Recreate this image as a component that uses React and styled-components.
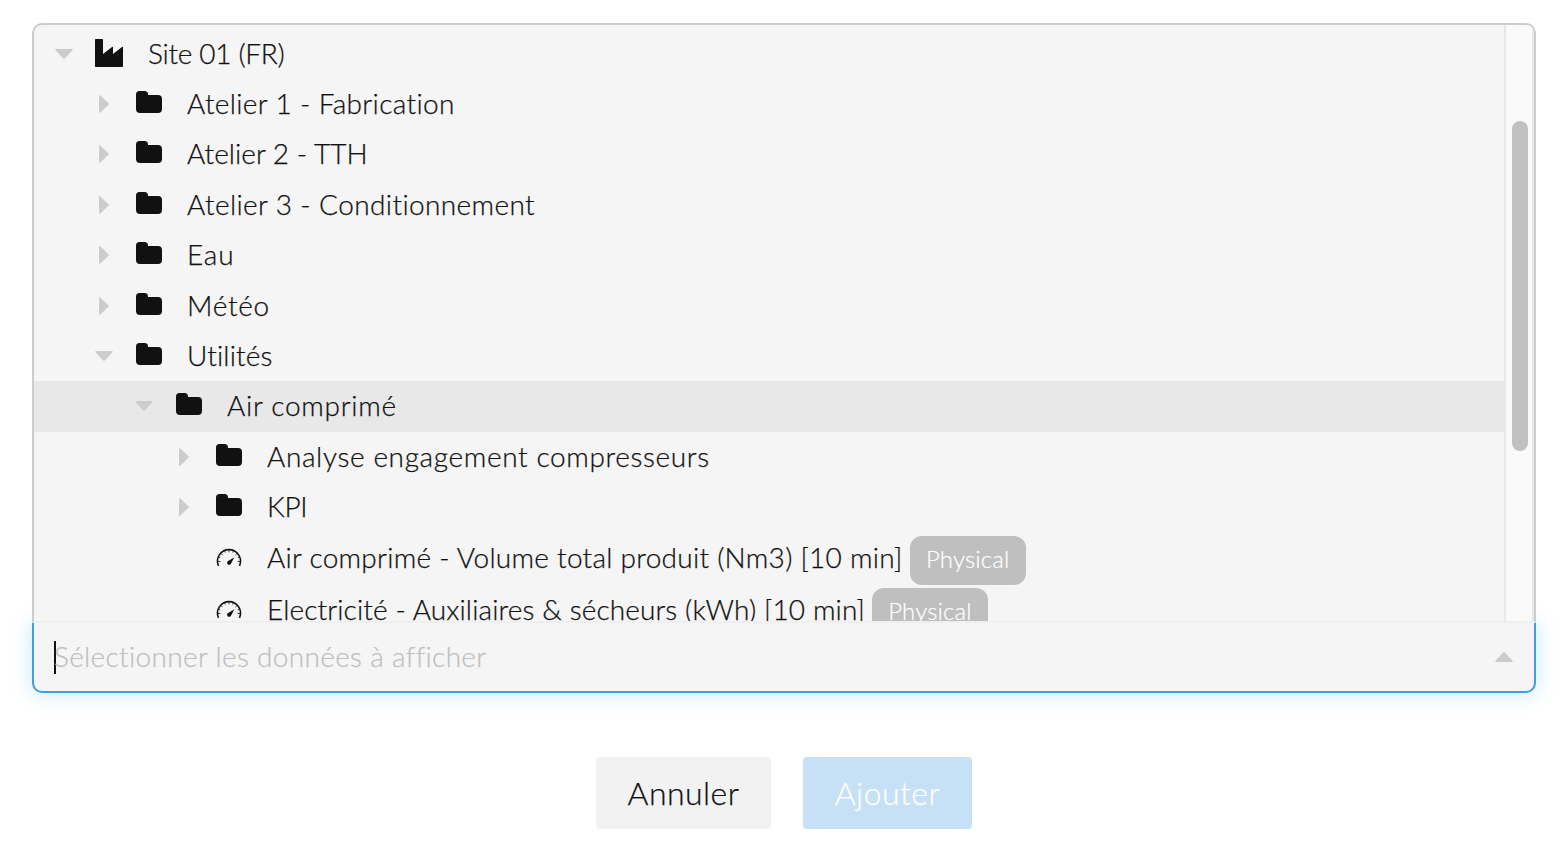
import React, { useState } from 'react';
import styled, { createGlobalStyle } from 'styled-components';

const GlobalStyle = createGlobalStyle`
  * {
    box-sizing: border-box;
  }

  body {
    margin: 0;
    background: #fff;
    color: #111;
    font-family: Lato, 'Open Sans', sans-serif;
    font-weight: 300;
    overflow: hidden;
  }
`;

const Page = styled.main`
  height: 864px;
  padding: 23px 32px 0;
`;

const Picker = styled.div`
  display: flex;
  flex-direction: column;
`;

const TreePanel = styled.div`
  position: relative;
  z-index: 1;
  display: flex;
  height: 600px;
  border: 2px solid #ccc;
  border-bottom-color: #efefef;
  border-radius: 10px 10px 0 0;
  background: #f5f5f5;
  overflow: hidden;
`;

const Tree = styled.ul`
  flex: 1;
  height: 596px;
  margin: 0;
  padding: 3.4px 0 0;
  list-style: none;
  overflow: hidden;
`;

const Row = styled.li`
  display: flex;
  align-items: center;
  height: ${props => (props.$leaf ? '52px' : '50.4px')};
  padding-left: ${props => props.$level * 40 + 20}px;
  background: ${props => (props.$selected ? '#e8e8e8' : 'transparent')};
  cursor: pointer;
`;

const Toggle = styled.span`
  display: flex;
  justify-content: center;
  width: 20px;
  margin-right: 20px;
  color: #ccc;
`;

const IconSlot = styled.span`
  display: flex;
  min-width: 30px;
  margin-right: 23px;
  padding-bottom: 2px;
`;

const Label = styled.span`
  padding-bottom: 2px;
  font-size: 28px;
  line-height: 40px;
  white-space: nowrap;
  letter-spacing: ${props => props.$tracking || 0}px;
  -webkit-text-stroke: 0.25px currentColor;
`;

const Badge = styled.span`
  height: 49px;
  width: 116px;
  margin: 4px 0 0 7px;
  border-radius: 12px;
  background: #bfbfbf;
  color: #fff;
  font-size: 24px;
  line-height: 46px;
  letter-spacing: 0.15px;
  text-align: center;
  -webkit-text-stroke: 0.2px currentColor;
`;

const ScrollTrack = styled.div`
  width: 30px;
  padding: 96px 4px 0 6px;
  border: solid #e8e8e8;
  border-width: 0 2px;
  background: #fafafa;
`;

const ScrollThumb = styled.div`
  width: 16px;
  height: 330px;
  border-radius: 8px;
  background: #c1c1c1;
`;

const SearchField = styled.div`
  display: flex;
  align-items: center;
  height: 70px;
  padding: 0 21px 0 20px;
  border: 2px solid #409fdd;
  border-top: 0;
  border-radius: 0 0 10px 10px;
  background: #f5f5f5;
  color: #ccc;
  box-shadow: 0 0 20px rgba(34, 164, 230, 0.28);
`;

const Caret = styled.span`
  width: 2px;
  height: 33px;
  margin-right: -2px;
  background: #111;
`;

const Placeholder = styled(Label)`
  flex: 1;
  color: #bfbfbf;
`;

const Actions = styled.div`
  display: flex;
  justify-content: center;
  gap: 32px;
  margin-top: 64px;
`;

const Button = styled.button`
  width: ${props => (props.$primary ? 169 : 175)}px;
  height: 72px;
  padding: 0 0 2px;
  border: 0;
  border-radius: 4px;
  background: ${props => (props.$primary ? '#c6e0f5' : '#f2f2f2')};
  color: ${props => (props.$primary ? '#fff' : '#111')};
  font: inherit;
  font-size: 32px;
  letter-spacing: 0.45px;
  -webkit-text-stroke: 0.25px currentColor;
`;

const Arrow = ({ direction }) => {
  if (direction === 'right') {
    return (
      <svg width="10" height="18" viewBox="0 0 10 18" fill="currentColor">
        <path d="M0 1Q0 0 1 .3L9.5 8.2Q10.3 9 9.5 9.8L1 17.7Q0 18 0 17Z" />
      </svg>
    );
  }
  return (
    <svg
      width="18"
      height="10"
      viewBox="0 0 18 10"
      fill="currentColor"
      transform={direction === 'up' ? 'rotate(180)' : undefined}
    >
      <path d="M1 0Q0 0 .3 1L8.2 9.5Q9 10.3 9.8 9.5L17.7 1Q18 0 17 0Z" />
    </svg>
  );
};

const FolderIcon = () => (
  <svg width="30" height="26" viewBox="0 0 30 26" fill="#111">
    <path d="M5.500 1h5q3.500 0 3.500 3.500V5h10q4 0 4 4v10q0 4-4 4H6q-4 0-4-4V4.500Q2 1 5.500 1Z" />
  </svg>
);

const FactoryIcon = () => (
  <svg width="31" height="30" viewBox="0 0 31 30" fill="#111">
    <path d="M1.800 1h6.400q.8 0 .8.800V16l9-7q1-.8 1 .3V16l9-7q1-.8 1 .3V28.200q0 .8-.8.800H1.800q-.8 0-.8-.8V1.800q0-.8.800-.8Z" />
  </svg>
);

const GaugeIcon = () => (
  <svg width="30" height="26" viewBox="0 0 30 26" fill="none" stroke="#111">
    <path d="M4.500 21.800A11.500 11.500 0 1 1 25.500 21.800" strokeWidth="1.600" />
    <path
      d="M4 17.500h2.500M26 17.500h-2.500M15 6v2.300M7 9.500l1.600 1.600M23 9.500l-1.600 1.600M4.600 13.200l1.600.6M25.400 13.200l-1.600.6M10.700 7l.6 1.600M19.300 7l-.6 1.600"
      strokeWidth="0.800"
    />
    <path d="M20.400 13.300L17.200 19.300A2.100 2.100 0 1 1 14.600 16.700Z" fill="#111" stroke="none" />
  </svg>
);

const icons = {
  factory: FactoryIcon,
  folder: FolderIcon,
  gauge: GaugeIcon
};

const nodes = [
  { id: 1, level: 0, icon: 'factory', arrow: 'down', label: 'Site 01 (FR)', tracking: -0.3 },
  { id: 2, level: 1, icon: 'folder', arrow: 'right', label: 'Atelier 1 - Fabrication', tracking: 0.35 },
  { id: 3, level: 1, icon: 'folder', arrow: 'right', label: 'Atelier 2 - TTH', tracking: 0.03 },
  { id: 4, level: 1, icon: 'folder', arrow: 'right', label: 'Atelier 3 - Conditionnement', tracking: 0.39 },
  { id: 5, level: 1, icon: 'folder', arrow: 'right', label: 'Eau', tracking: 0.8 },
  { id: 6, level: 1, icon: 'folder', arrow: 'right', label: 'Météo', tracking: 0.7 },
  { id: 7, level: 1, icon: 'folder', arrow: 'down', label: 'Utilités', tracking: 0.15 },
  { id: 8, level: 2, icon: 'folder', arrow: 'down', label: 'Air comprimé', tracking: 0.72 },
  { id: 9, level: 3, icon: 'folder', arrow: 'right', label: 'Analyse engagement compresseurs', tracking: 0.63 },
  { id: 10, level: 3, icon: 'folder', arrow: 'right', label: 'KPI', tracking: -0.3 },
  { id: 11, level: 3, icon: 'gauge', label: 'Air comprimé - Volume total produit (Nm3) [10 min]', tracking: 0.27, badge: 'Physical' },
  { id: 12, level: 3, icon: 'gauge', label: 'Electricité - Auxiliaires & sécheurs (kWh) [10 min]', tracking: 0.12, badge: 'Physical' }
];

const App = () => {
  const [selected, setSelected] = useState(8);

  return (
    <Page>
      <GlobalStyle />
      <Picker>
        <TreePanel>
          <Tree>
            {nodes.map(node => {
              const Icon = icons[node.icon];
              return (
                <Row
                  key={node.id}
                  $level={node.level}
                  $leaf={!!node.badge}
                  $selected={node.id === selected}
                  onClick={() => setSelected(node.id)}
                >
                  <Toggle>{node.arrow && <Arrow direction={node.arrow} />}</Toggle>
                  <IconSlot>
                    <Icon />
                  </IconSlot>
                  <Label $tracking={node.tracking}>{node.label}</Label>
                  {node.badge && <Badge>{node.badge}</Badge>}
                </Row>
              );
            })}
          </Tree>
          <ScrollTrack>
            <ScrollThumb />
          </ScrollTrack>
        </TreePanel>
        <SearchField>
          <Caret />
          <Placeholder $tracking={0.33}>Sélectionner les données à afficher</Placeholder>
          <Arrow direction="up" />
        </SearchField>
      </Picker>
      <Actions>
        <Button>Annuler</Button>
        <Button $primary>Ajouter</Button>
      </Actions>
    </Page>
  );
};

export default App;
